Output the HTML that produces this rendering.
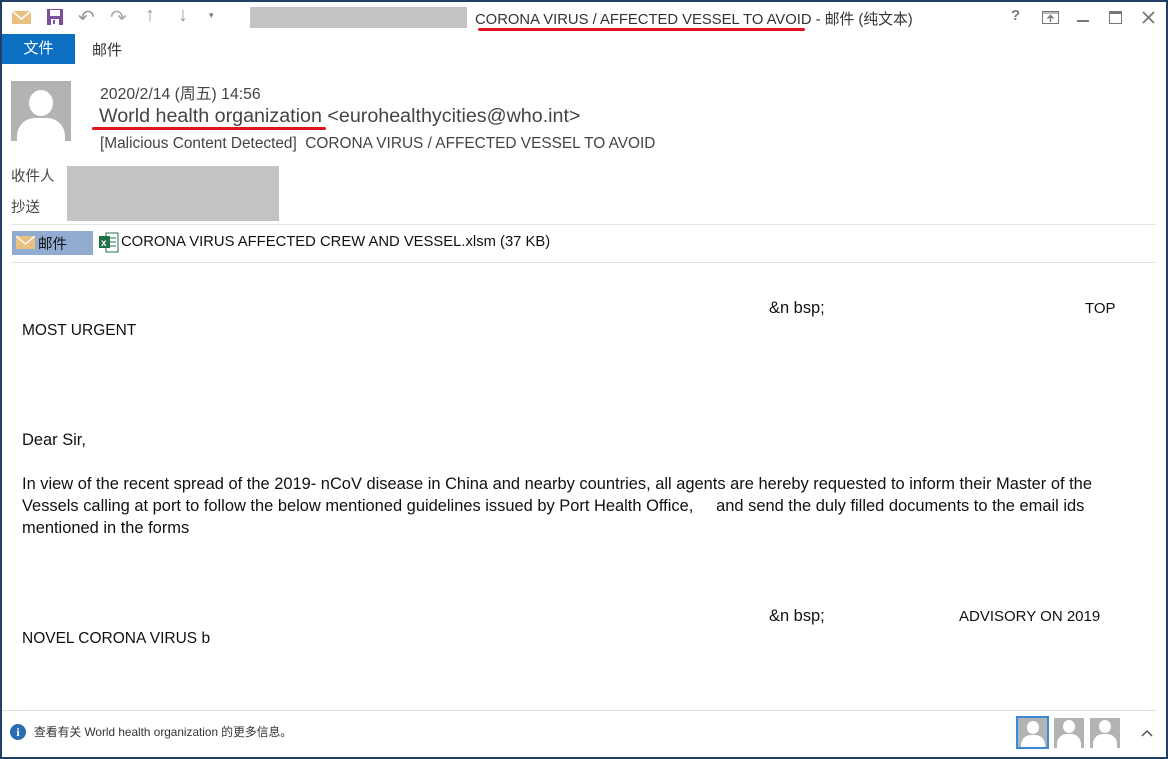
<!DOCTYPE html>
<html><head><meta charset="utf-8"><style>
*{margin:0;padding:0;box-sizing:border-box}
body{width:1168px;height:759px;overflow:hidden;background:#fff;font-family:"Liberation Sans","Noto Sans CJK SC",sans-serif;position:relative;color:#000}
.a{position:absolute;white-space:nowrap}
.frame{position:absolute;left:0;top:0;width:1168px;height:759px;border:2px solid #1e3f66;pointer-events:none}
.g{color:#444}
.bt{font-size:15px;color:#111}
.p{font-size:16.45px;color:#111}
.av{position:absolute;background:#b3b3b3;overflow:hidden}
</style></head><body>
<svg class="a" style="left:12px;top:10px" width="20" height="16"><rect x="0" y="1" width="19" height="13" fill="#e8c07f"/><path d="M0 1 L9.5 9 L19 1" stroke="#fff" stroke-width="1.5" fill="none"/></svg>
<svg class="a" style="left:46px;top:8px" width="18" height="18"><rect x="1" y="1" width="16" height="16" fill="#7d4e9f"/><rect x="4" y="2" width="10" height="6" fill="#fff"/><rect x="5" y="11" width="8" height="6" fill="#fff"/><rect x="7" y="12" width="2" height="4" fill="#7d4e9f"/></svg>
<div class="a" style="left:78px;top:5px;font-size:20px;color:#999">&#x21B6;</div>
<div class="a" style="left:110px;top:5px;font-size:20px;color:#aaa">&#x21B7;</div>
<div class="a" style="left:145px;top:4px;font-size:20px;color:#999">&#x2191;</div>
<div class="a" style="left:178px;top:4px;font-size:20px;color:#999">&#x2193;</div>
<div class="a" style="left:209px;top:10px;font-size:9px;color:#777">&#x25BE;</div>
<div class="a" style="left:250px;top:7px;width:217px;height:21px;background:#c3c3c3"></div>
<div class="a" style="left:475px;top:8px;font-size:14.8px;color:#333">CORONA VIRUS / AFFECTED VESSEL TO AVOID - 邮件 (纯文本)</div>
<div class="a" style="left:478px;top:28px;width:327px;height:3px;background:#e0141e;border-radius:2px"></div>
<div class="a" style="left:1011px;top:7px;font-size:15px;font-weight:bold;color:#777">?</div>
<svg class="a" style="left:1042px;top:11px" width="18" height="14"><rect x="0.5" y="0.5" width="16" height="12" fill="none" stroke="#777"/><line x1="0" y1="2" x2="17" y2="2" stroke="#777"/><path d="M8.5 11 V5 M5.5 7.5 L8.5 4.5 L11.5 7.5" stroke="#777" stroke-width="1.5" fill="none"/></svg>
<div class="a" style="left:1077px;top:20px;width:12px;height:2px;background:#777"></div>
<svg class="a" style="left:1109px;top:11px" width="14" height="14"><rect x="0.5" y="0.5" width="12" height="12" fill="none" stroke="#777"/><rect x="0" y="0" width="13" height="3" fill="#777"/></svg>
<svg class="a" style="left:1142px;top:11px" width="14" height="14"><path d="M1 1 L12 12 M12 1 L1 12" stroke="#777" stroke-width="1.8"/></svg>
<div class="a" style="left:2px;top:34px;width:73px;height:30px;background:#0c6fc1;color:#fff;font-size:15px;text-align:center;line-height:29px">文件</div>
<div class="a" style="left:92px;top:39px;font-size:15px;color:#333">邮件</div>
<div class="av" style="left:11px;top:81px;width:60px;height:60px"><div style="position:absolute;left:18px;top:9px;width:24px;height:26px;border-radius:50%;background:#fff"></div><div style="position:absolute;left:6px;top:37px;width:48px;height:30px;border-radius:18px 18px 0 0;background:#fff"></div></div>
<div class="a g" style="left:100px;top:81px;font-size:15.8px">2020/2/14 (周五) 14:56</div>
<div class="a g" style="left:99px;top:105px;font-size:19.7px">World health organization &lt;eurohealthycities@who.int&gt;</div>
<div class="a" style="left:92px;top:127px;width:234px;height:3px;background:#e0141e;border-radius:2px"></div>
<div class="a g" style="left:100px;top:135px;font-size:15.4px">[Malicious Content Detected]&nbsp; CORONA VIRUS / AFFECTED VESSEL TO AVOID</div>
<div class="a g" style="left:11px;top:165px;font-size:14.5px">收件人</div>
<div class="a g" style="left:11px;top:196px;font-size:14.5px">抄送</div>
<div class="a" style="left:67px;top:166px;width:212px;height:55px;background:#c3c3c3"></div>
<div class="a" style="left:11px;top:224px;width:1145px;height:1px;background:#e3e3e3"></div>
<div class="a" style="left:12px;top:231px;width:81px;height:24px;background:#91acd0"></div>
<svg class="a" style="left:16px;top:236px" width="19" height="14"><rect x="0" y="0" width="19" height="13" fill="#e8c07f"/><path d="M0 0 L9.5 8 L19 0" stroke="#fff" stroke-width="1.3" fill="none"/></svg>
<div class="a" style="left:38px;top:233px;font-size:14.5px;color:#111">邮件</div>
<svg class="a" style="left:99px;top:232px" width="20" height="21"><rect x="7" y="1" width="12" height="19" fill="#fff" stroke="#1e7145"/><path d="M10 6h7M10 10h7M10 14h7" stroke="#1e7145"/><rect x="0" y="4" width="11" height="12" fill="#1e7145"/><text x="2" y="14" font-size="10" fill="#fff" font-family="Liberation Sans" font-weight="bold">x</text></svg>
<div class="a" style="left:121px;top:234px;font-size:14.8px;color:#111">CORONA VIRUS AFFECTED CREW AND VESSEL.xlsm (37 KB)</div>
<div class="a" style="left:11px;top:262px;width:1145px;height:1px;background:#e3e3e3"></div>
<div class="a p" style="left:769px;top:299px">&amp;n bsp;</div>
<div class="a bt" style="left:1085px;top:300px">TOP</div>
<div class="a bt" style="left:22px;top:322px;font-size:15.5px">MOST URGENT</div>
<div class="a p" style="left:22px;top:431px">Dear Sir,</div>
<div class="a p" style="left:22px;top:475px">In view of the recent spread of the 2019- nCoV disease in China and nearby countries, all agents are hereby requested to inform their Master of the</div>
<div class="a p" style="left:22px;top:497px">Vessels calling at port to follow the below mentioned guidelines issued by Port Health Office, &nbsp;&nbsp;&nbsp; and send the duly filled documents to the email ids</div>
<div class="a p" style="left:22px;top:519px">mentioned in the forms</div>
<div class="a p" style="left:769px;top:607px">&amp;n bsp;</div>
<div class="a bt" style="left:959px;top:608px">ADVISORY ON 2019</div>
<div class="a bt" style="left:22px;top:630px;font-size:15.5px">NOVEL CORONA VIRUS b</div>
<div class="a" style="left:2px;top:710px;width:1155px;height:1px;background:#e0e0e0"></div>
<div class="a" style="left:10px;top:724px;width:16px;height:16px;border-radius:50%;background:#2b6cb3;color:#fff;font-size:12px;font-weight:bold;text-align:center;line-height:16px;font-family:'Liberation Serif',serif">i</div>
<div class="a" style="left:34px;top:723px;font-size:11.8px;color:#333">查看有关 World health organization 的更多信息。</div>
<div class="av" style="left:1016px;top:716px;width:33px;height:33px;border:2px solid #3a8ad6"><div style="position:absolute;left:9px;top:3px;width:12px;height:13px;border-radius:50%;background:#fff"></div><div style="position:absolute;left:3px;top:17px;width:24px;height:16px;border-radius:10px 10px 0 0;background:#fff"></div></div>
<div class="av" style="left:1054px;top:718px;width:30px;height:30px"><div style="position:absolute;left:9px;top:2px;width:12px;height:13px;border-radius:50%;background:#fff"></div><div style="position:absolute;left:3px;top:16px;width:24px;height:16px;border-radius:10px 10px 0 0;background:#fff"></div></div>
<div class="av" style="left:1090px;top:718px;width:30px;height:30px"><div style="position:absolute;left:9px;top:2px;width:12px;height:13px;border-radius:50%;background:#fff"></div><div style="position:absolute;left:3px;top:16px;width:24px;height:16px;border-radius:10px 10px 0 0;background:#fff"></div></div>
<svg class="a" style="left:1141px;top:729px" width="12" height="8"><path d="M1 7 L6 2 L11 7" stroke="#555" stroke-width="1.5" fill="none"/></svg>
<div class="frame"></div>
</body></html>
